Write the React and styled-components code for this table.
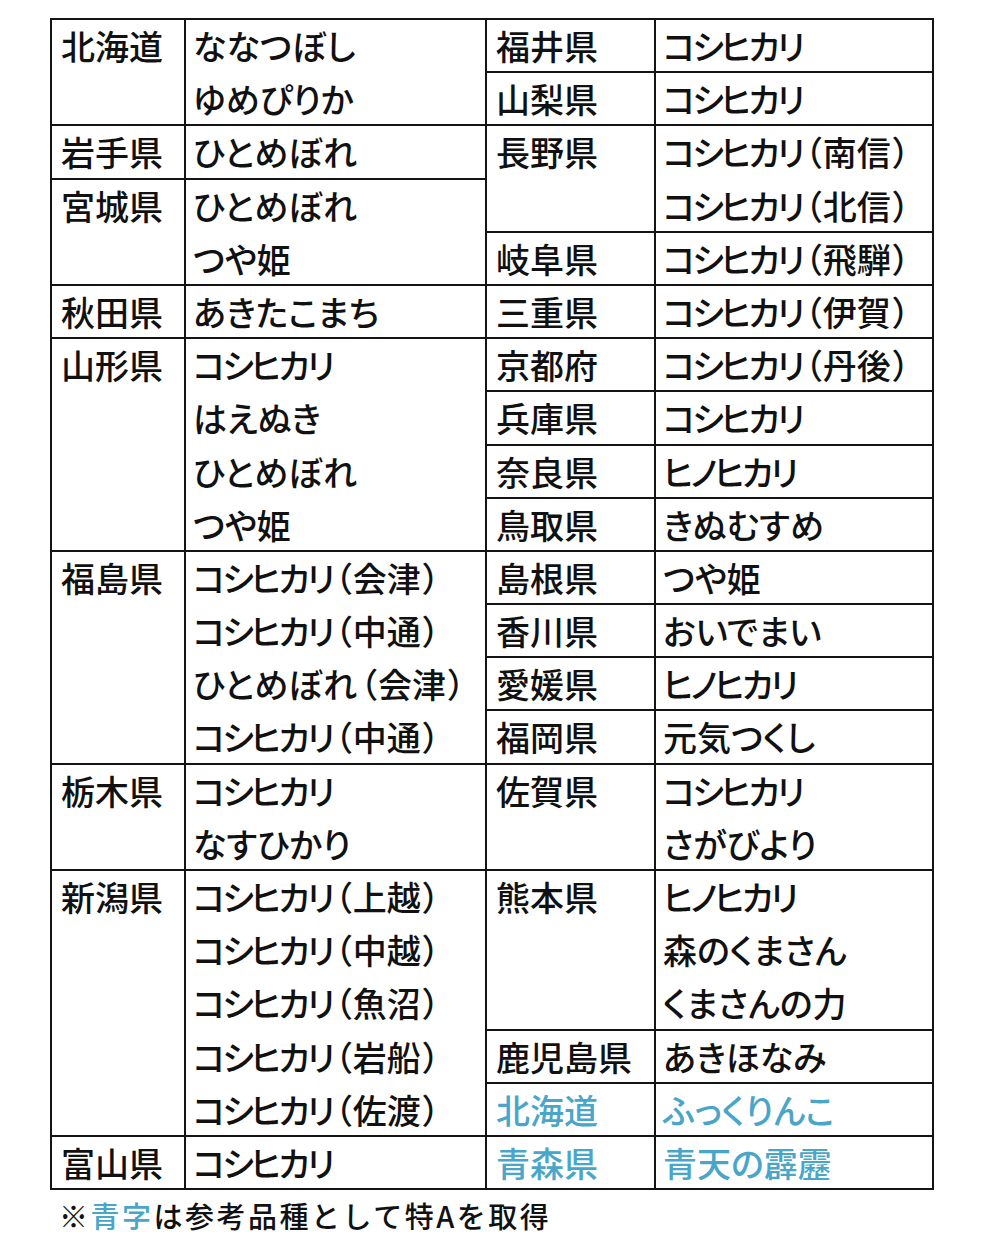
import React from "react";
import styled, { createGlobalStyle } from "styled-components";

const GlobalStyle = createGlobalStyle`
  html, body {
    margin: 0;
    padding: 0;
    background: #ffffff;
  }
  body {
    font-family: "Noto Sans CJK JP", "Noto Sans", sans-serif;
    color: #111111;
  }
`;

const BLUE = "#4aa6c9";

// each entry: [prefecture, [varieties], isReference]
const leftGroups = [
  ["北海道", ["ななつぼし", "ゆめぴりか"]],
  ["岩手県", ["ひとめぼれ"]],
  ["宮城県", ["ひとめぼれ", "つや姫"]],
  ["秋田県", ["あきたこまち"]],
  ["山形県", ["コシヒカリ", "はえぬき", "ひとめぼれ", "つや姫"]],
  ["福島県", ["コシヒカリ（会津）", "コシヒカリ（中通）", "ひとめぼれ（会津）", "コシヒカリ（中通）"]],
  ["栃木県", ["コシヒカリ", "なすひかり"]],
  ["新潟県", ["コシヒカリ（上越）", "コシヒカリ（中越）", "コシヒカリ（魚沼）", "コシヒカリ（岩船）", "コシヒカリ（佐渡）"]],
  ["富山県", ["コシヒカリ"]],
];

const rightGroups = [
  ["福井県", ["コシヒカリ"]],
  ["山梨県", ["コシヒカリ"]],
  ["長野県", ["コシヒカリ（南信）", "コシヒカリ（北信）"]],
  ["岐阜県", ["コシヒカリ（飛騨）"]],
  ["三重県", ["コシヒカリ（伊賀）"]],
  ["京都府", ["コシヒカリ（丹後）"]],
  ["兵庫県", ["コシヒカリ"]],
  ["奈良県", ["ヒノヒカリ"]],
  ["鳥取県", ["きぬむすめ"]],
  ["島根県", ["つや姫"]],
  ["香川県", ["おいでまい"]],
  ["愛媛県", ["ヒノヒカリ"]],
  ["福岡県", ["元気つくし"]],
  ["佐賀県", ["コシヒカリ", "さがびより"]],
  ["熊本県", ["ヒノヒカリ", "森のくまさん", "くまさんの力"]],
  ["鹿児島県", ["あきほなみ"]],
  ["北海道", ["ふっくりんこ"], true],
  ["青森県", ["青天の霹靂"], true],
];

const Page = styled.div`
  padding: 18px 0 0 50px;
`;

const Table = styled.div`
  display: grid;
  width: 880px;
  grid-template-columns: 132px 299px 167px 276px;
  grid-template-rows: repeat(22, 51.2px);
  gap: 2px;
  background: #141414;
  border: 2px solid #141414;
`;

const Cell = styled.div`
  grid-column: ${(p) => p.$col};
  grid-row: ${(p) => p.$row} / span ${(p) => p.$span};
  background: #ffffff;
  padding-left: ${(p) => (p.$col % 2 ? 9 : 7)}px;
  color: ${(p) => (p.$blue ? BLUE : "#111111")};
  font-size: 34px;
  font-weight: 500;
  font-feature-settings: "palt";
  white-space: nowrap;
  overflow: hidden;
`;

const Line = styled.div`
  height: 53.2px;
  line-height: 51.2px;
`;

// katakana in the original font are set tighter than hiragana
const Kana = styled.span`
  letter-spacing: -3px;
`;

const Paren = styled.span`
  margin: ${(p) => (p.$open ? "0 1px 0 3px" : "0 0 0 2px")};
`;

const Note = styled.div`
  margin-top: 5px;
  padding-left: 9px;
  font-size: 29px;
  font-weight: 500;
  letter-spacing: 2.5px;
  line-height: 40px;
`;

const Blue = styled.span`
  color: ${BLUE};
`;

function setText(text) {
  const parts = text.match(/[\u30A0-\u30FF]+|[（）]|[^\u30A0-\u30FF（）]+/g) || [];
  return parts.map((part, i) => {
    if (/^[\u30A0-\u30FF]/.test(part)) return <Kana key={i}>{part}</Kana>;
    if (part === "（" || part === "）")
      return (
        <Paren key={i} $open={part === "（"}>
          {part}
        </Paren>
      );
    return <React.Fragment key={i}>{part}</React.Fragment>;
  });
}

function renderGroups(groups, firstCol) {
  let row = 1;
  const cells = [];
  groups.forEach(([pref, varieties, blue], i) => {
    const span = varieties.length;
    cells.push(
      <Cell key={`p${firstCol}-${i}`} $col={firstCol} $row={row} $span={span} $blue={blue}>
        <Line>{pref}</Line>
      </Cell>,
      <Cell key={`v${firstCol}-${i}`} $col={firstCol + 1} $row={row} $span={span} $blue={blue}>
        {varieties.map((v, j) => (
          <Line key={j}>{setText(v)}</Line>
        ))}
      </Cell>
    );
    row += span;
  });
  return cells;
}

export default function App() {
  return (
    <>
      <GlobalStyle />
      <Page>
        <Table>
          {renderGroups(leftGroups, 1)}
          {renderGroups(rightGroups, 3)}
        </Table>
        <Note>
          ※<Blue>青字</Blue>は参考品種として特Aを取得
        </Note>
      </Page>
    </>
  );
}
